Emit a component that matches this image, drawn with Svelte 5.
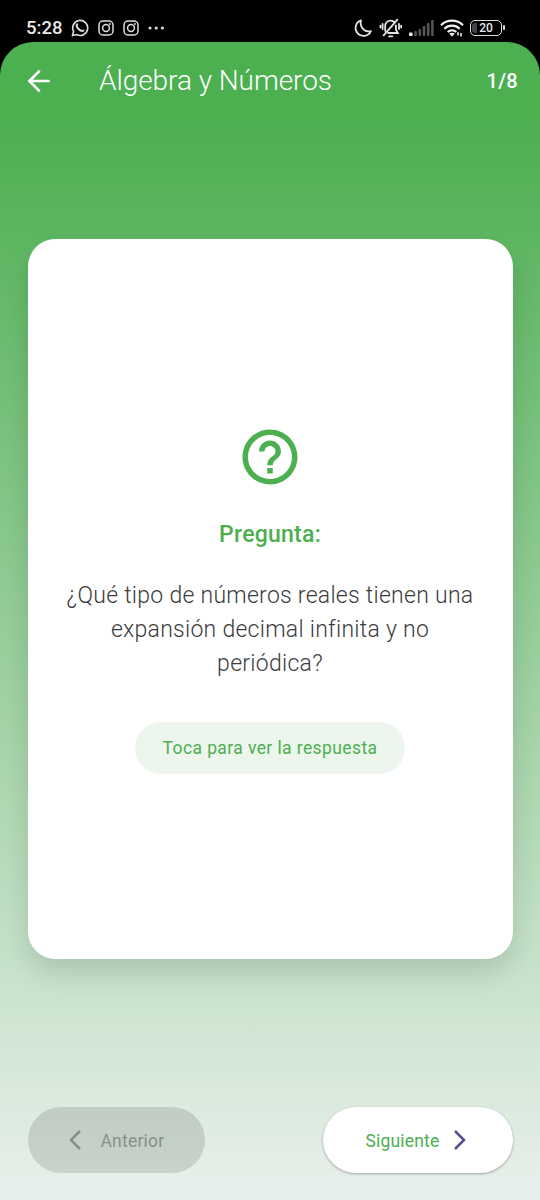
<script>
	let topic = 'Álgebra y Números';
	let current = $state(0);
	let flipped = $state(false);

	const total = 8;
	const question = '¿Qué tipo de números reales tienen una expansión decimal infinita y no periódica?';
	const answer = 'Números irracionales';

	// barras de señal, de la más baja a la más alta
	const bars = [5, 7, 10, 13, 16];

	function go(step) {
		current = Math.min(total - 1, Math.max(0, current + step));
		flipped = false;
	}
</script>

<div class="phone">
	<div class="status">
		<div class="status__left">
			<span class="status__time">5:28</span>
			<svg width="18" height="18" viewBox="0 0 18 18" fill="none" stroke="#ddd" stroke-width="1.6">
				<path d="M1.4 16.6l1.2-4.1A7.5 7.5 0 1 1 5.6 15.5z" stroke-linejoin="round" />
				<path d="M6.1 5.3c-.9 1.1-.4 2.8 1.5 4.7s3.7 2.6 4.9 1.6" stroke-width="2" stroke-linecap="round" />
			</svg>
			{#each [0, 1] as i (i)}
				<svg width="16" height="16" viewBox="0 0 16 16" fill="none" stroke="#ddd" stroke-width="1.5">
					<rect x="1" y="1" width="14" height="14" rx="4" />
					<circle cx="8" cy="8" r="3.4" />
					<circle cx="11.9" cy="4.1" r="1" fill="#ddd" stroke="none" />
				</svg>
			{/each}
			<svg width="18" height="4" viewBox="0 0 18 4" fill="#ddd">
				<circle cx="2" cy="2" r="1.6" />
				<circle cx="8.2" cy="2" r="1.6" />
				<circle cx="14.4" cy="2" r="1.6" />
			</svg>
		</div>
		<div class="status__right">
			<svg width="20" height="20" viewBox="0 0 20 20" fill="none" stroke="#e4e4e4" stroke-width="1.8" stroke-linejoin="round">
				<path d="M8 2.3A8 8 0 1 0 17.9 13.1C11.5 14.6 6.3 9.2 8 2.3z" />
			</svg>
			<svg width="24" height="20" viewBox="0 0 24 20" fill="none" stroke="#e4e4e4" stroke-width="1.8" stroke-linecap="round">
				<path d="M6.2 12.8V8.2C6.2 5 8.6 2.6 11.6 2.6c1.3 0 2.4.4 3.3 1.1M16.9 7.5v4.2l2 3.3H9.2M4.6 17.3L18.4 1.7M10.1 18.4h3.2" />
				<path d="M3.6 6v5M1.4 7.6v1.800M20 6v5M22.1 7.6v1.8" />
			</svg>
			<svg width="25" height="18" viewBox="0 0 25 18">
				<rect x="0" y="13.5" width="3.6" height="3.5" rx="1" fill="#f0f0f0" />
				{#each bars as h, i (i)}
					<rect x={5.3 + i * 4.2} y={17 - h} width="2.6" height={h} rx=".8" fill="#555" />
				{/each}
			</svg>
			<svg width="24" height="20" viewBox="0 0 24 20" fill="none" stroke="#f0f0f0" stroke-width="2.2">
				<path d="M1 7.2c6-6 16-6 22 0M4.3 10.7c4.2-4.1 11.2-4.1 15.4 0M7.7 14c2.5-2.3 6.100-2.3 8.6 0" />
				<path d="M9.2 15.8c1.6-1.4 4-1.4 5.6 0L12 18.6z" fill="#f0f0f0" stroke="none" />
				<path d="M18 14.2v3.4M21 15v3.4" stroke-width="1.6" />
			</svg>
			<div class="battery"><span class="battery__level"></span>20</div>
		</div>
	</div>

	<div class="screen">
		<header class="bar">
			<button class="bar__back" aria-label="Atrás">
				<svg width="24" height="24" viewBox="0 0 24 24" fill="none" stroke="#fff" stroke-width="2.7" stroke-linecap="round">
					<path d="M21.6 12H3M12 2.4L2.4 12l9.6 9.6" />
				</svg>
			</button>
			<h1>{topic}</h1>
			<span class="bar__count">{current + 1}/{total}</span>
		</header>

		<main class="body">
			<button class="card" onclick={() => (flipped = !flipped)}>
				<svg width="66" height="66" viewBox="0 0 24 24" fill="#4caf50">
					<path d="M11 18h2v-2h-2v2zm1-16C6.48 2 2 6.48 2 12s4.48 10 10 10 10-4.48 10-10S17.52 2 12 2zm0 18c-4.41 0-8-3.59-8-8s3.59-8 8-8 8 3.59 8 8-3.59 8-8 8zm0-14c-2.21 0-4 1.79-4 4h2c0-1.1.9-2 2-2s2 .9 2 2c0 2-3 1.75-3 5h2c0-2.25 3-2.5 3-5 0-2.21-1.79-4-4-4z" />
				</svg>
				<span class="card__label">{flipped ? 'Respuesta:' : 'Pregunta:'}</span>
				<span class="card__text">{flipped ? answer : question}</span>
				<span class="card__hint">Toca para ver la {flipped ? 'pregunta' : 'respuesta'}</span>
			</button>

			<nav class="nav">
				<button class="nav__button nav__button--prev" disabled={current === 0} onclick={() => go(-1)}>
					<svg width="12" height="20" viewBox="0 0 12 20" fill="none" stroke="currentColor" stroke-width="2.5">
						<path d="M11 1L2 10l9 9" />
					</svg>
					<span>Anterior</span>
				</button>
				<button class="nav__button nav__button--next" disabled={current === total - 1} onclick={() => go(1)}>
					<span>Siguiente</span>
					<svg width="12" height="20" viewBox="0 0 12 20" fill="none" stroke="#5b4a96" stroke-width="2.5">
						<path d="M1 1l9 9-9 9" />
					</svg>
				</button>
			</nav>
		</main>
	</div>
</div>

<style>
	:global(body) {
		background: #000;
	}

	.phone {
		display: flex;
		flex-direction: column;
		height: 1200px;
		font-family: Roboto, 'Liberation Sans', sans-serif;
		background: #000;
	}

	button {
		font: inherit;
		border: 0;
		padding: 0;
		background: none;
	}

	svg {
		display: block;
		flex: none;
	}

	.status {
		display: flex;
		justify-content: space-between;
		align-items: center;
		box-sizing: border-box;
		height: 42px;
		padding: 14px 38px 0 26px;
		color: #e8e8e8;
	}

	.status__left,
	.status__right {
		display: flex;
		align-items: center;
	}

	.status__left {
		gap: 9px;
	}

	.status__time {
		font-size: 18.5px;
		font-weight: 500;
	}

	.status__right {
		gap: 6px;
	}

	.battery {
		position: relative;
		display: flex;
		align-items: center;
		justify-content: center;
		box-sizing: border-box;
		width: 32px;
		height: 16px;
		border: 1.5px solid #ddd;
		border-radius: 5px;
		font-size: 12px;
		font-weight: 500;
	}

	.battery::after {
		content: '';
		position: absolute;
		right: -4px;
		top: 4px;
		width: 2px;
		height: 5px;
		border-radius: 1px;
		background: #ddd;
	}

	.battery__level {
		position: absolute;
		left: 1px;
		top: 2px;
		width: 5px;
		height: 10px;
		border-radius: 3px 0 0 3px;
		background: #444;
	}

	.screen {
		flex: 1;
		display: flex;
		flex-direction: column;
		border-radius: 33px 33px 0 0;
		overflow: hidden;
		background: linear-gradient(#4caf50 0, #4caf50 77px, #e9f0ec 100%);
	}

	.bar {
		display: flex;
		align-items: center;
		height: 77px;
		padding: 0 22px 0 27px;
		color: #fff;
	}

	h1 {
		flex: 1;
		margin: 0 0 0 48px;
		font-size: 28px;
		font-weight: 300;
		line-height: 1;
		letter-spacing: -0.05px;
	}

	.bar__count {
		font-size: 20px;
		font-weight: 500;
		letter-spacing: 0.3px;
	}

	.body {
		flex: 1;
		display: flex;
		flex-direction: column;
		justify-content: space-between;
		padding: 120px 27.5px 27.5px;
	}

	.card {
		display: flex;
		flex-direction: column;
		align-items: center;
		box-sizing: border-box;
		height: 720px;
		padding: 184.5px 34px 0;
		border-radius: 27.5px;
		background: #fff;
		box-shadow: 0 14px 28px rgba(0, 0, 0, 0.13);
	}

	.card__label {
		margin-top: 29px;
		font-size: 23px;
		font-weight: 500;
		line-height: 31px;
		letter-spacing: 0.25px;
		color: #4caf50;
	}

	.card__text {
		margin-top: 29px;
		font-size: 23px;
		font-weight: 300;
		line-height: 34.2px;
		letter-spacing: 0.27px;
		color: #3c3c3c;
	}

	.card__hint {
		margin-top: 41px;
		padding: 1px 27.5px 0;
		border-radius: 27.5px;
		font-size: 17.5px;
		line-height: 51px;
		letter-spacing: 0.4px;
		color: #4caf50;
		background: #ecf6ed;
	}

	.nav {
		display: flex;
		justify-content: space-between;
	}

	.nav__button {
		display: flex;
		align-items: center;
		box-sizing: border-box;
		height: 66px;
		border-radius: 33px;
		font-size: 17.5px;
		letter-spacing: 0.2px;
	}

	.nav__button span {
		padding-top: 2px;
	}

	.nav__button--prev {
		gap: 20px;
		padding: 0 41px;
		color: #888f8a;
		background: rgba(0, 0, 0, 0.12);
	}

	.nav__button--next {
		gap: 14px;
		padding: 0 47px 0 42px;
		color: #4caf50;
		background: #fff;
		box-shadow: 0 1px 3px rgba(0, 0, 0, 0.3);
	}
</style>
